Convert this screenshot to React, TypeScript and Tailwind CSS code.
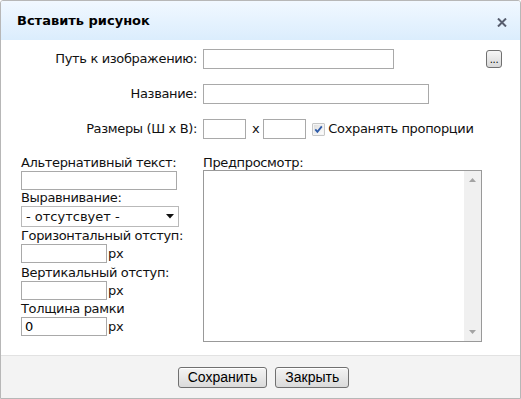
import React from "react";

const FONT = "font-['DejaVu_Sans','Verdana',sans-serif]";

function TextInput({ className = "", value }: { className?: string; value?: string }) {
  return (
    <input
      readOnly
      value={value ?? ""}
      className={[
        "block border border-[#a9a9a9] bg-white px-[3px] text-[13px] text-black outline-none",
        FONT,
        className,
      ].join(" ")}
    />
  );
}

function DialogButton({ children }: { children: React.ReactNode }) {
  return (
    <button className="h-[21px] rounded-[3px] border border-[#707070] bg-gradient-to-b from-[#f4f4f4] to-[#dadada] px-[9px] text-[14px] leading-[18px] text-black shadow-[inset_0_1px_0_#ffffff] font-['Liberation_Sans','Arial',sans-serif]">
      {children}
    </button>
  );
}

function Checkbox() {
  return (
    <svg width="13" height="13" viewBox="0 0 13 13" className="shrink-0">
      <defs>
        <linearGradient id="cb" x1="0" y1="0" x2="1" y2="1">
          <stop offset="0" stopColor="#dcdcdc" />
          <stop offset="1" stopColor="#ffffff" />
        </linearGradient>
      </defs>
      <rect x="0.5" y="0.5" width="12" height="12" fill="#8e8f8f" />
      <rect x="1.5" y="1.5" width="10" height="10" fill="url(#cb)" stroke="#f4f4f4" />
      <path d="M3.3 6.4 L5.4 8.8 L9.8 3.4" fill="none" stroke="#2d5aa8" strokeWidth="1.8" />
    </svg>
  );
}

function Field({ label, className = "", children }: { label: string; className?: string; children: React.ReactNode }) {
  return (
    <div className={className}>
      <div className="whitespace-nowrap leading-[16px]">{label}</div>
      {children}
    </div>
  );
}

function PxInput({ value }: { value?: string }) {
  return (
    <div className="flex items-center">
      <TextInput className="h-[19px] w-[86px]" value={value} />
      <span className="ml-[1px] leading-[16px]">px</span>
    </div>
  );
}

export default function App() {
  return (
    <div
      className={`flex h-[399px] w-[521px] flex-col overflow-hidden rounded-t-[3px] border border-[#b7b7b7] bg-white text-[13px] text-[#111] ${FONT}`}
    >
      {/* Header */}
      <div className="flex h-[39px] shrink-0 items-center justify-between bg-gradient-to-b from-[#f1f8ff] to-[#dbedfd] pl-[16px] pr-[13px]">
        <span className="text-[13px] font-bold text-black">Вставить рисунок</span>
        <svg width="10" height="9" viewBox="0 0 10 9" className="mt-[3px]">
          <path d="M1 0.5 L9 8.5 M9 0.5 L1 8.5" stroke="#575d6e" strokeWidth="2" />
        </svg>
      </div>

      {/* Body */}
      <div className="flex-1 pt-[9px] tracking-[-0.35px]">
        <div className="flex h-[20px] items-center">
          <span className="w-[196px] whitespace-nowrap text-right">Путь к изображению:</span>
          <TextInput className="ml-[6px] h-[20px] w-[191px]" />
          <button className="ml-auto mr-[18px] flex h-[18px] w-[16px] items-end justify-center rounded-[3px] border border-[#707070] bg-gradient-to-b from-[#f6f6f6] to-[#d8d8d8] pb-[2px] text-[10px] leading-none text-black">
            ...
          </button>
        </div>

        <div className="mt-[15px] flex h-[20px] items-center">
          <span className="w-[196px] text-right">Название:</span>
          <TextInput className="ml-[6px] h-[20px] w-[226px]" />
        </div>

        <div className="mt-[15px] flex h-[20px] items-center">
          <span className="w-[196px] whitespace-nowrap text-right">Размеры (Ш x В):</span>
          <TextInput className="ml-[6px] h-[20px] w-[43px]" />
          <span className="ml-[6px]">x</span>
          <TextInput className="ml-[4px] h-[20px] w-[43px]" />
          <span className="ml-[6px]">
            <Checkbox />
          </span>
          <span className="ml-[3px] whitespace-nowrap">Сохранять пропорции</span>
        </div>

        <div className="mt-[16px] flex">
          {/* Left column */}
          <div className="ml-[20px] w-[162px]">
            <Field label="Альтернативный текст:">
              <TextInput className="h-[19px] w-[156px]" />
            </Field>
            <Field label="Выравнивание:">
              <div className="flex h-[21px] w-[158px] items-center justify-between border border-[#b9b9b9] bg-white pl-[4px] pr-[4px]">
                <span className="whitespace-pre tracking-normal">- отсутсвует -</span>
                <svg width="8" height="5" viewBox="0 0 8 5">
                  <path d="M0 0 H8 L4 4.5 Z" fill="#111" />
                </svg>
              </div>
            </Field>
            <Field label="Горизонтальный отступ:" className="mt-[1px]">
              <PxInput />
            </Field>
            <Field label="Вертикальный отступ:" className="mt-[2px]">
              <PxInput />
            </Field>
            <Field label="Толщина рамки" className="mt-[1px]">
              <PxInput value="0" />
            </Field>
          </div>

          {/* Preview */}
          <div className="ml-[20px]">
            <div className="leading-[15px]">Предпросмотр:</div>
            <div className="flex h-[172px] w-[279px] border border-[#999999] bg-white">
              <div className="flex-1" />
              <div className="flex w-[17px] flex-col items-center justify-between bg-[#f0f0f0] py-[7px]">
                <svg width="7" height="4" viewBox="0 0 7 4">
                  <path d="M0 4 L3.5 0 L7 4 Z" fill="#a3a3a3" />
                </svg>
                <svg width="7" height="4" viewBox="0 0 7 4">
                  <path d="M0 0 L3.5 4 L7 0 Z" fill="#a3a3a3" />
                </svg>
              </div>
            </div>
          </div>
        </div>
      </div>

      {/* Footer */}
      <div className="flex h-[43px] shrink-0 items-center justify-center gap-[8px] border-t border-[#e2e2e2] bg-[#f3f3f3] pl-[6px]">
        <DialogButton>Сохранить</DialogButton>
        <DialogButton>Закрыть</DialogButton>
      </div>
    </div>
  );
}
